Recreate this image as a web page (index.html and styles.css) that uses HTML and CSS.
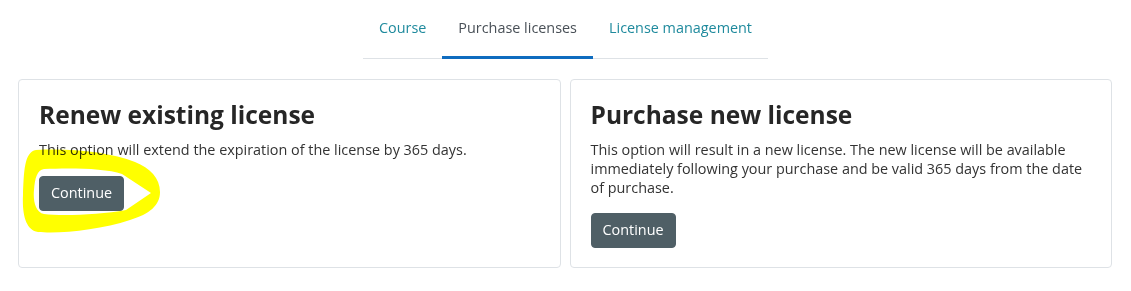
FILE: index.html
```html
<!DOCTYPE html>
<html lang="en">
<head>
    <meta charset="UTF-8">
    <meta name="viewport" content="width=device-width, initial-scale=1.0">
    <title>Purchase licenses</title>
    <link rel="stylesheet" href="styles.css">
</head>
<body>
    <nav class="tabs">
        <a class="tab" href="#">Course</a>
        <a class="tab active" href="#">Purchase licenses</a>
        <a class="tab" href="#">License management</a>
    </nav>

    <div class="options">
        <div class="card">
            <h3 class="card-title">Renew existing license</h3>
            <p class="card-text">This option will extend the expiration of the license by 365 days.</p>
            <div><button class="btn">Continue</button></div>
        </div>
        <div class="card">
            <h3 class="card-title">Purchase new license</h3>
            <p class="card-text">This option will result in a new license. The new license will be available immediately following your purchase and be valid 365 days from the date of purchase.</p>
            <div><button class="btn">Continue</button></div>
        </div>
    </div>

    <!-- highlighter scribble drawn over the first button -->
    <svg class="scribble" width="1131" height="291" viewBox="0 0 1131 291">
        <path fill="#ffff00" fill-rule="evenodd"
              d="M36 150 C70 148 110 152 135 162 C150 168 160 178 160 192 C160 205 150 214 130 220 C100 230 60 234 38 232 C26 230 22 215 23 195 C24 172 24 152 36 150 Z
                 M44 169 C70 168 105 168 122 174 L151 193 L126 210 C100 215 60 216 44 214 C35 212 33 200 34 190 C35 178 37 170 44 169 Z"/>
    </svg>
</body>
</html>
```

FILE: styles.css
```css
/* Page */
body {
    margin: 0;
    position: relative;
    font-family: 'Open Sans', 'Noto Sans', Arial, sans-serif;
    font-size: 14.4px;
    line-height: 1.3;
    color: #333333;
    background-color: #FFFFFF;
}

/* Tabs */
.tabs {
    display: flex;
    justify-content: center;
    width: fit-content;
    margin: 0 auto;
    border-bottom: 1px solid #dee2e6;
}

.tab {
    display: block;
    padding: 19px 16px 18px;
    margin-bottom: -1px;
    border-bottom: 3px solid transparent;
    color: #1f8a9d;
    text-decoration: none;
}

.tab.active {
    color: #495057;
    border-bottom-color: #0f6cbf;
}

/* Cards */
.options {
    display: flex;
    gap: 9px;
    padding: 20px 19px 0 18px;
}

.card {
    flex: 1;
    padding: 20px 20px 19px;
    border: 1px solid #dee2e6;
    border-radius: 4px;
}

.card-title {
    margin: 0 0 12px;
    font-size: 24.5px;
    font-weight: 700;
    line-height: 1.2;
    color: #262626;
}

.card-text {
    margin: 0 0 16px;
}

.btn {
    padding: 7px 11px;
    background-color: #4f5f66;
    color: #FFFFFF;
    border: 1px solid #4f5f66;
    border-radius: 4px;
    font-family: inherit;
    font-size: 14.4px;
    line-height: 1.3;
    cursor: pointer;
}

/* Highlighter mark */
.scribble {
    position: absolute;
    left: 0;
    top: 0;
    pointer-events: none;
    mix-blend-mode: multiply;
}
```
